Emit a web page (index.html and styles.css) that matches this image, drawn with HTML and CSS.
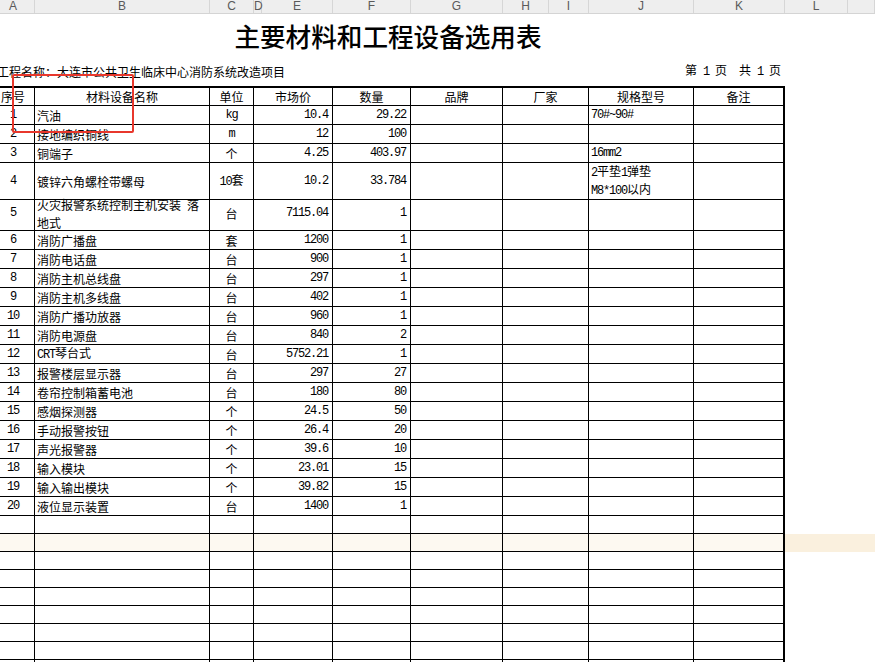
FILE: index.html
```html
<!DOCTYPE html>
<html lang="zh-CN">
<head>
<meta charset="utf-8">
<title>主要材料和工程设备选用表</title>
<link rel="stylesheet" href="styles.css">
</head>
<body>
<div class="colhdr">
  <div>A</div><div>B</div><div>C</div><div>D</div><div>E</div><div>F</div><div>G</div><div>H</div><div>I</div><div>J</div><div>K</div><div>L</div><div></div>
</div>
<div class="sheet">
  <div class="title">主要材料和工程设备选用表</div>
  <div class="proj"><span>工程名称：大连市公共卫生临床中心消防系统改造项目</span><span>第<span class="n"> 1 </span>页<span class="n">  </span>共<span class="n"> 1 </span>页</span></div>

  <div class="row hdr">
    <div class="c ctr">序号</div><div class="c ctr">材料设备名称</div><div class="c ctr">单位</div><div class="c ctr">市场价</div><div class="c ctr">数量</div><div class="c ctr">品牌</div><div class="c ctr">厂家</div><div class="c ctr">规格型号</div><div class="c ctr k">备注</div><div class="f"></div>
  </div>

  <div class="row r19"><div class="c ctr m">1</div><div class="c">汽油</div><div class="c ctr m">kg</div><div class="c num">10.4</div><div class="c num">29.22</div><div class="c"></div><div class="c"></div><div class="c"><span class="n">70#~90#</span></div><div class="c k"></div><div class="f"></div></div>
  <div class="row r19"><div class="c ctr m">2</div><div class="c">接地编织铜线</div><div class="c ctr m">m</div><div class="c num">12</div><div class="c num">100</div><div class="c"></div><div class="c"></div><div class="c"></div><div class="c k"></div><div class="f"></div></div>
  <div class="row r19"><div class="c ctr m">3</div><div class="c">铜端子</div><div class="c ctr">个</div><div class="c num">4.25</div><div class="c num">403.97</div><div class="c"></div><div class="c"></div><div class="c"><span class="n">16mm2</span></div><div class="c k"></div><div class="f"></div></div>
  <div class="row r34"><div class="c ctr m">4</div><div class="c">镀锌六角螺栓带螺母</div><div class="c ctr"><span><span class="n">10</span>套</span></div><div class="c num">10.2</div><div class="c num">33.784</div><div class="c"></div><div class="c"></div><div class="c"><span><span class="n">2</span>平垫<span class="n">1</span>弹垫<br><span class="n">M8*100</span>以内</span></div><div class="c k"></div><div class="f"></div></div>
  <div class="row r34"><div class="c ctr m">5</div><div class="c"><span>火灾报警系统控制主机安装<span class="n"> </span>落<br>地式</span></div><div class="c ctr">台</div><div class="c num">7115.04</div><div class="c num">1</div><div class="c"></div><div class="c"></div><div class="c"></div><div class="c k"></div><div class="f"></div></div>
  <div class="row r19"><div class="c ctr m">6</div><div class="c">消防广播盘</div><div class="c ctr">套</div><div class="c num">1200</div><div class="c num">1</div><div class="c"></div><div class="c"></div><div class="c"></div><div class="c k"></div><div class="f"></div></div>
  <div class="row r19"><div class="c ctr m">7</div><div class="c">消防电话盘</div><div class="c ctr">台</div><div class="c num">900</div><div class="c num">1</div><div class="c"></div><div class="c"></div><div class="c"></div><div class="c k"></div><div class="f"></div></div>
  <div class="row r19"><div class="c ctr m">8</div><div class="c">消防主机总线盘</div><div class="c ctr">台</div><div class="c num">297</div><div class="c num">1</div><div class="c"></div><div class="c"></div><div class="c"></div><div class="c k"></div><div class="f"></div></div>
  <div class="row r19"><div class="c ctr m">9</div><div class="c">消防主机多线盘</div><div class="c ctr">台</div><div class="c num">402</div><div class="c num">1</div><div class="c"></div><div class="c"></div><div class="c"></div><div class="c k"></div><div class="f"></div></div>
  <div class="row r19"><div class="c ctr m">10</div><div class="c">消防广播功放器</div><div class="c ctr">台</div><div class="c num">960</div><div class="c num">1</div><div class="c"></div><div class="c"></div><div class="c"></div><div class="c k"></div><div class="f"></div></div>
  <div class="row r19"><div class="c ctr m">11</div><div class="c">消防电源盘</div><div class="c ctr">台</div><div class="c num">840</div><div class="c num">2</div><div class="c"></div><div class="c"></div><div class="c"></div><div class="c k"></div><div class="f"></div></div>
  <div class="row r19"><div class="c ctr m">12</div><div class="c"><span><span class="n">CRT</span>琴台式</span></div><div class="c ctr">台</div><div class="c num">5752.21</div><div class="c num">1</div><div class="c"></div><div class="c"></div><div class="c"></div><div class="c k"></div><div class="f"></div></div>
  <div class="row r19"><div class="c ctr m">13</div><div class="c">报警楼层显示器</div><div class="c ctr">台</div><div class="c num">297</div><div class="c num">27</div><div class="c"></div><div class="c"></div><div class="c"></div><div class="c k"></div><div class="f"></div></div>
  <div class="row r19"><div class="c ctr m">14</div><div class="c">卷帘控制箱蓄电池</div><div class="c ctr">台</div><div class="c num">180</div><div class="c num">80</div><div class="c"></div><div class="c"></div><div class="c"></div><div class="c k"></div><div class="f"></div></div>
  <div class="row r19"><div class="c ctr m">15</div><div class="c">感烟探测器</div><div class="c ctr">个</div><div class="c num">24.5</div><div class="c num">50</div><div class="c"></div><div class="c"></div><div class="c"></div><div class="c k"></div><div class="f"></div></div>
  <div class="row r19"><div class="c ctr m">16</div><div class="c">手动报警按钮</div><div class="c ctr">个</div><div class="c num">26.4</div><div class="c num">20</div><div class="c"></div><div class="c"></div><div class="c"></div><div class="c k"></div><div class="f"></div></div>
  <div class="row r19"><div class="c ctr m">17</div><div class="c">声光报警器</div><div class="c ctr">个</div><div class="c num">39.6</div><div class="c num">10</div><div class="c"></div><div class="c"></div><div class="c"></div><div class="c k"></div><div class="f"></div></div>
  <div class="row r19"><div class="c ctr m">18</div><div class="c">输入模块</div><div class="c ctr">个</div><div class="c num">23.01</div><div class="c num">15</div><div class="c"></div><div class="c"></div><div class="c"></div><div class="c k"></div><div class="f"></div></div>
  <div class="row r19"><div class="c ctr m">19</div><div class="c">输入输出模块</div><div class="c ctr">个</div><div class="c num">39.82</div><div class="c num">15</div><div class="c"></div><div class="c"></div><div class="c"></div><div class="c k"></div><div class="f"></div></div>
  <div class="row r19"><div class="c ctr m">20</div><div class="c">液位显示装置</div><div class="c ctr">台</div><div class="c num">1400</div><div class="c num">1</div><div class="c"></div><div class="c"></div><div class="c"></div><div class="c k"></div><div class="f"></div></div>

  <div class="row e18"><div class="c"></div><div class="c"></div><div class="c"></div><div class="c"></div><div class="c"></div><div class="c"></div><div class="c"></div><div class="c"></div><div class="c k"></div><div class="f"></div></div>
  <div class="row e18 sel"><div class="c"></div><div class="c"></div><div class="c"></div><div class="c"></div><div class="c"></div><div class="c"></div><div class="c"></div><div class="c"></div><div class="c k"></div><div class="f"></div></div>
  <div class="row e18"><div class="c"></div><div class="c"></div><div class="c"></div><div class="c"></div><div class="c"></div><div class="c"></div><div class="c"></div><div class="c"></div><div class="c k"></div><div class="f"></div></div>
  <div class="row e18"><div class="c"></div><div class="c"></div><div class="c"></div><div class="c"></div><div class="c"></div><div class="c"></div><div class="c"></div><div class="c"></div><div class="c k"></div><div class="f"></div></div>
  <div class="row e18"><div class="c"></div><div class="c"></div><div class="c"></div><div class="c"></div><div class="c"></div><div class="c"></div><div class="c"></div><div class="c"></div><div class="c k"></div><div class="f"></div></div>
  <div class="row e18"><div class="c"></div><div class="c"></div><div class="c"></div><div class="c"></div><div class="c"></div><div class="c"></div><div class="c"></div><div class="c"></div><div class="c k"></div><div class="f"></div></div>
  <div class="row e18"><div class="c"></div><div class="c"></div><div class="c"></div><div class="c"></div><div class="c"></div><div class="c"></div><div class="c"></div><div class="c"></div><div class="c k"></div><div class="f"></div></div>
  <div class="row e18"><div class="c"></div><div class="c"></div><div class="c"></div><div class="c"></div><div class="c"></div><div class="c"></div><div class="c"></div><div class="c"></div><div class="c k"></div><div class="f"></div></div>
  <div class="row e18"><div class="c"></div><div class="c"></div><div class="c"></div><div class="c"></div><div class="c"></div><div class="c"></div><div class="c"></div><div class="c"></div><div class="c k"></div><div class="f"></div></div>
</div>
<div class="mark"></div>
</body>
</html>
```
FILE: styles.css
```css
* { box-sizing: border-box; }

html, body {
  margin: 0;
  padding: 0;
}

body {
  width: 875px;
  height: 662px;
  overflow: hidden;
  position: relative;
  background: #ffffff;
  color: #000000;
  font-family: "Noto Sans CJK SC", sans-serif;
  font-size: 12px;
}

.colhdr {
  display: grid;
  grid-template-columns: 43px 175px 44px 8px 71px 78px 92px 46px 40px 105px 91px 63px 1fr;
  width: 883px;
  height: 14px;
  margin-left: -8px;
  background: #eeeeee;
  border-bottom: 1px solid #d4d4d4;
}

.colhdr div {
  border-right: 1px solid #d6d6d6;
  text-align: center;
  font-family: "Liberation Sans", Arial, sans-serif;
  font-size: 12px;
  line-height: 13px;
  color: #5a5a5a;
}

.sheet {
  width: 883px;
  margin-left: -8px;
}

.title {
  width: 792px;
  height: 42px;
  display: flex;
  align-items: center;
  justify-content: center;
  font-size: 25.6px;
  font-weight: 500;
}

.proj {
  width: 792px;
  height: 30px;
  display: flex;
  align-items: center;
  justify-content: space-between;
  padding: 0 3px 0 5px;
  line-height: 15px;
}

.row {
  display: grid;
  grid-template-columns: 43px 175px 44px 79px 78px 92px 86px 105px 91px 1fr;
}

.hdr { height: 20px; }
.r19 { height: 19px; }
.r34 { height: 34px; }
.e18 { height: 18px; }

.c {
  display: flex;
  align-items: center;
  padding: 0 2px;
  border-right: 1px solid #000;
  border-bottom: 1px solid #000;
  line-height: 15px;
  white-space: nowrap;
}

.hdr .c { border-top: 2px solid #000; }

.c.k { border-right-width: 2px; }

.ctr { justify-content: center; }

.num {
  justify-content: flex-end;
  padding-right: 4px;
  font-family: "Liberation Mono", monospace;
  font-size: 12px;
  letter-spacing: -1.2px;
}

.m {
  font-family: "Liberation Mono", monospace;
  font-size: 12px;
  letter-spacing: -1.2px;
}

.n {
  font-family: "Liberation Mono", monospace;
  font-size: 12px;
  letter-spacing: -1.2px;
  white-space: pre;
}

.sel .c { background: #fdf9f1; }
.sel .f { background: #faf0de; }

.mark {
  position: absolute;
  left: 12px;
  top: 74px;
  width: 122px;
  height: 59px;
  border: 2px solid #e8372c;
  border-radius: 2px;
}
```
